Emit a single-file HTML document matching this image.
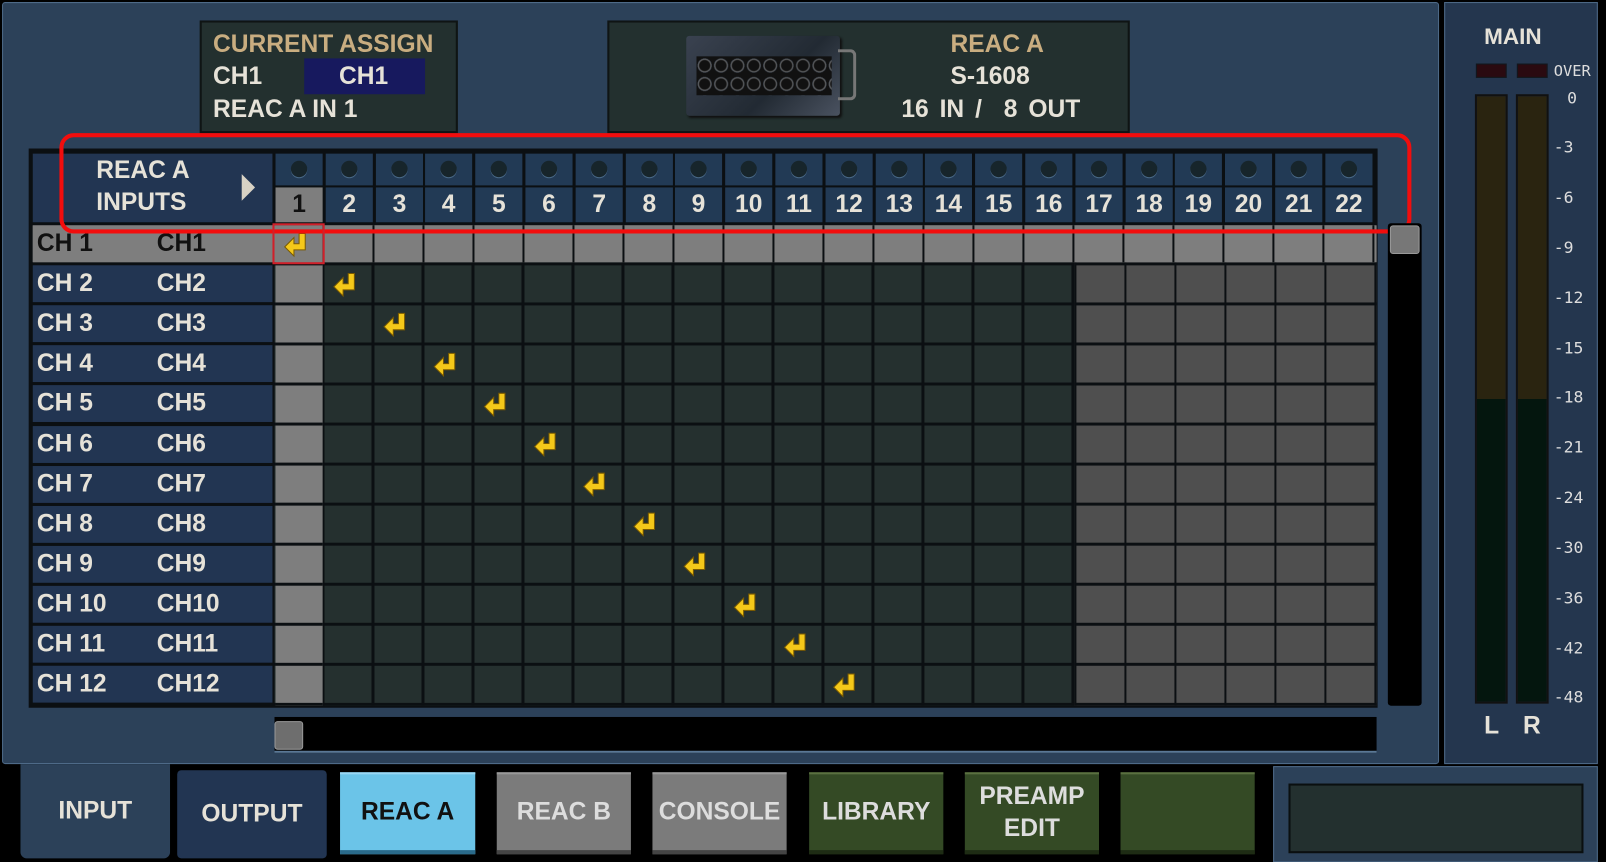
<!DOCTYPE html>
<html><head><meta charset="utf-8"><style>
*{margin:0;padding:0;box-sizing:border-box}
html,body{width:1606px;height:862px;overflow:hidden;background:#000}
#w{position:absolute;left:0;top:0;width:1568px;height:842px;transform:scale(1.02424);transform-origin:0 0;font-family:"Liberation Sans Narrow","Liberation Sans",sans-serif;font-weight:bold;color:#e6e2d8}
.a{position:absolute}
.t{position:absolute;white-space:nowrap;font-size:24px;line-height:1}
.cell{position:absolute;width:46px;text-align:center;font-size:24px;line-height:34px;top:183px;background:#223a55;height:34px}
.dot{position:absolute;top:150px;width:46px;height:31px;background:#223a55}
.dot:after{content:"";position:absolute;left:15px;top:7px;width:16px;height:16px;border-radius:50%;background:#17252b;box-shadow:0 1px 0 #4a6a88}
.lab{position:absolute;left:32px;width:234px;height:36px;background:#223552;font-size:24px;line-height:36px}
.lab span{position:absolute}
.arr{position:absolute;width:26px;height:26px}
.sc{position:absolute;left:1517px;font-size:16px;font-weight:normal;font-family:"DejaVu Sans Mono",monospace;color:#ddd}
.tab{position:absolute;top:754px;height:80px;font-size:24px;text-align:center;display:flex;align-items:center;justify-content:center;line-height:1.3}
</style></head><body><div id="w">
<!-- main panel -->
<div class="a" style="left:2px;top:2px;width:1403px;height:744px;background:#2c4159;border:1px solid #4e6a88;border-radius:3px"></div>
<div class="a" style="left:1410px;top:2px;width:150px;height:744px;background:#24364e;border:1px solid #4e6a88"></div>
<!-- current assign -->
<div class="a" style="left:195px;top:20px;width:252px;height:110px;background:#23302f;border:2px solid #0f1414"></div>
<div class="t" style="left:208px;top:32px;color:#c9ad80">CURRENT ASSIGN</div>
<div class="a" style="left:297px;top:57px;width:118px;height:35px;background:#17195e"></div>
<div class="t" style="left:208px;top:63px">CH1</div>
<div class="t" style="left:331px;top:63px">CH1</div>
<div class="t" style="left:208px;top:95px">REAC A IN 1</div>
<!-- reac box -->
<div class="a" style="left:593px;top:20px;width:510px;height:110px;background:#23302f;border:2px solid #0f1414"></div>
<div class="a" style="left:670px;top:35px;width:150px;height:78px;background:linear-gradient(135deg,#3a4250,#222a33 60%,#4a5260);border-radius:3px;box-shadow:2px 2px 2px #111"></div>
<div class="a" style="left:680px;top:55px;width:132px;height:38px;background:repeating-radial-gradient(circle at 8px 9px,#111 0 5px,#666 6px,transparent 7px) 0 0/16px 18px"></div>
<div class="a" style="left:818px;top:48px;width:18px;height:50px;border:3px solid #777;border-left:none;border-radius:0 6px 6px 0"></div>
<div class="t" style="left:928px;top:32px;color:#c9ad80">REAC A</div>
<div class="t" style="left:928px;top:63px">S-1608</div>
<div class="t" style="left:880px;top:95px;word-spacing:4px">16 IN / &nbsp;8 OUT</div>
<!-- grid frame -->
<div class="a" style="left:28px;top:145px;width:1317px;height:546px;background:#0b0f12"></div>
<div class="a" style="left:32px;top:150px;width:234px;height:67px;background:#223552"></div>
<div class="t" style="left:94px;top:155px">REAC A</div>
<div class="t" style="left:94px;top:186px">INPUTS</div>
<div class="a" style="left:236px;top:170px;width:0;height:0;border-left:13px solid #d8d2c4;border-top:13px solid transparent;border-bottom:13px solid transparent"></div>
<!-- header dots & numbers -->
<div class="dot" style="left:269px"></div><div class="dot" style="left:318px"></div><div class="dot" style="left:367px"></div><div class="dot" style="left:415px"></div><div class="dot" style="left:464px"></div><div class="dot" style="left:513px"></div><div class="dot" style="left:562px"></div><div class="dot" style="left:611px"></div><div class="dot" style="left:659px"></div><div class="dot" style="left:708px"></div><div class="dot" style="left:757px"></div><div class="dot" style="left:806px"></div><div class="dot" style="left:855px"></div><div class="dot" style="left:903px"></div><div class="dot" style="left:952px"></div><div class="dot" style="left:1001px"></div><div class="dot" style="left:1050px"></div><div class="dot" style="left:1099px"></div><div class="dot" style="left:1147px"></div><div class="dot" style="left:1196px"></div><div class="dot" style="left:1245px"></div><div class="dot" style="left:1294px"></div>
<div class="cell" style="left:269px;background:#7e7e7e;color:#111">1</div><div class="cell" style="left:318px">2</div><div class="cell" style="left:367px">3</div><div class="cell" style="left:415px">4</div><div class="cell" style="left:464px">5</div><div class="cell" style="left:513px">6</div><div class="cell" style="left:562px">7</div><div class="cell" style="left:611px">8</div><div class="cell" style="left:659px">9</div><div class="cell" style="left:708px">10</div><div class="cell" style="left:757px">11</div><div class="cell" style="left:806px">12</div><div class="cell" style="left:855px">13</div><div class="cell" style="left:903px">14</div><div class="cell" style="left:952px">15</div><div class="cell" style="left:1001px">16</div><div class="cell" style="left:1050px">17</div><div class="cell" style="left:1099px">18</div><div class="cell" style="left:1147px">19</div><div class="cell" style="left:1196px">20</div><div class="cell" style="left:1245px">21</div><div class="cell" style="left:1294px">22</div>
<!-- cell area -->
<div class="a" style="left:268px;top:220px;width:782px;height:469px;background:linear-gradient(90deg,transparent 0 46px,#0b0f12 46px) 0 0/48.82px 100%,linear-gradient(transparent 0 36px,#0b0f12 36px) 0 0/100% 39.1px,#25302f"></div>
<div class="a" style="left:1049px;top:220px;width:295px;height:469px;background:linear-gradient(90deg,#0b0f12 0 2px,transparent 2px) 0 0/48.82px 100%,linear-gradient(transparent 0 36px,#0b0f12 36px) 0 0/100% 39.1px,#4f4f4f"></div>
<div class="a" style="left:269px;top:220px;width:46px;height:469px;background:linear-gradient(transparent 0 36px,#0b0f12 36px) 0 0/100% 39.1px,#7e7e7e"></div>
<div class="a" style="left:32px;top:220px;width:1311px;height:36px;background:linear-gradient(90deg,transparent 0 236px,#0b0f12 236px 237px,transparent 237px),linear-gradient(90deg,transparent 0 46px,#0b0f12 46px) 236px 0/48.82px 100% no-repeat,#7e7e7e"></div>
<div class="a" style="left:268px;top:220px;width:1076px;height:36px;background:linear-gradient(90deg,#7e7e7e 0 1px,#7e7e7e 1px 47px,#0b0f12 47px 49px) 0 0/48.82px 100%"></div>
<!-- labels -->
<div class="lab" style="top:220px;background:#7e7e7e;color:#111"><span style="left:4px">CH 1</span><span style="left:121px">CH1</span></div>
<div class="lab" style="top:259px"><span style="left:4px">CH 2</span><span style="left:121px">CH2</span></div>
<div class="lab" style="top:298px"><span style="left:4px">CH 3</span><span style="left:121px">CH3</span></div>
<div class="lab" style="top:337px"><span style="left:4px">CH 4</span><span style="left:121px">CH4</span></div>
<div class="lab" style="top:376px"><span style="left:4px">CH 5</span><span style="left:121px">CH5</span></div>
<div class="lab" style="top:416px"><span style="left:4px">CH 6</span><span style="left:121px">CH6</span></div>
<div class="lab" style="top:455px"><span style="left:4px">CH 7</span><span style="left:121px">CH7</span></div>
<div class="lab" style="top:494px"><span style="left:4px">CH 8</span><span style="left:121px">CH8</span></div>
<div class="lab" style="top:533px"><span style="left:4px">CH 9</span><span style="left:121px">CH9</span></div>
<div class="lab" style="top:572px"><span style="left:4px">CH 10</span><span style="left:121px">CH10</span></div>
<div class="lab" style="top:611px"><span style="left:4px">CH 11</span><span style="left:121px">CH11</span></div>
<div class="lab" style="top:650px"><span style="left:4px">CH 12</span><span style="left:121px">CH12</span></div>
<!-- arrows -->
<svg width="0" height="0" style="position:absolute"><defs><symbol id="ar" viewBox="0 0 26 26"><path d="M16 2h6v16H11v6L2 15l9-9v6h5z" fill="#f4c81a" stroke="#7a5a00" stroke-width="1"/></symbol></defs></svg>
<svg class="arr" style="left:276px;top:226px"><use href="#ar"/></svg>
<svg class="arr" style="left:324px;top:265px"><use href="#ar"/></svg>
<svg class="arr" style="left:373px;top:304px"><use href="#ar"/></svg>
<svg class="arr" style="left:422px;top:343px"><use href="#ar"/></svg>
<svg class="arr" style="left:471px;top:382px"><use href="#ar"/></svg>
<svg class="arr" style="left:520px;top:421px"><use href="#ar"/></svg>
<svg class="arr" style="left:568px;top:460px"><use href="#ar"/></svg>
<svg class="arr" style="left:617px;top:499px"><use href="#ar"/></svg>
<svg class="arr" style="left:666px;top:538px"><use href="#ar"/></svg>
<svg class="arr" style="left:715px;top:578px"><use href="#ar"/></svg>
<svg class="arr" style="left:764px;top:617px"><use href="#ar"/></svg>
<svg class="arr" style="left:812px;top:656px"><use href="#ar"/></svg>
<!-- red outlines -->
<div class="a" style="left:58px;top:130px;width:1320px;height:98px;border:4px solid #f20d0d;border-radius:14px"></div>
<div class="a" style="left:266px;top:218px;width:51px;height:40px;border:2px solid #d0202a"></div>
<!-- scrollbars -->
<div class="a" style="left:1355px;top:218px;width:33px;height:471px;background:#000;border-radius:3px"></div>
<div class="a" style="left:1357px;top:220px;width:29px;height:28px;background:#777;border-radius:3px;border:1px solid #999"></div>
<div class="a" style="left:268px;top:700px;width:1076px;height:35px;background:#000;border-bottom:2px solid #5a7896"></div>
<div class="a" style="left:268px;top:704px;width:28px;height:28px;background:#6e6e6e;border:1px solid #999;border-radius:3px"></div>
<!-- meter -->
<div class="t" style="left:1449px;top:25px;font-size:22px">MAIN</div>
<div class="a" style="left:1441px;top:62px;width:30px;height:14px;background:#2a0a10;border:1px solid #11181e"></div>
<div class="a" style="left:1481px;top:62px;width:30px;height:14px;background:#2a0a10;border:1px solid #11181e"></div>
<div class="sc" style="left:1517px;top:60px;font-size:15px">OVER</div>
<div class="a" style="left:1440px;top:92px;width:32px;height:595px;background:linear-gradient(#2a2410 0 50%,#04160e 50%);border:2px solid #111"></div>
<div class="a" style="left:1480px;top:92px;width:32px;height:595px;background:linear-gradient(#2a2410 0 50%,#04160e 50%);border:2px solid #111"></div>
<div class="sc" style="left:1530px;top:86px">0</div>
<div class="sc" style="top:134px">-3</div><div class="sc" style="top:183px">-6</div><div class="sc" style="top:232px">-9</div>
<div class="sc" style="top:281px">-12</div><div class="sc" style="top:330px">-15</div><div class="sc" style="top:378px">-18</div>
<div class="sc" style="top:427px">-21</div><div class="sc" style="top:476px">-24</div><div class="sc" style="top:525px">-30</div>
<div class="sc" style="top:574px">-36</div><div class="sc" style="top:623px">-42</div><div class="sc" style="top:671px">-48</div>
<div class="t" style="left:1449px;top:697px">L</div><div class="t" style="left:1487px;top:697px">R</div>
<!-- tabs -->
<div class="tab" style="left:20px;top:746px;width:146px;height:92px;background:#2c4159;border-radius:0 0 6px 6px">INPUT</div>
<div class="tab" style="left:173px;top:752px;width:146px;height:86px;background:#223552;border-radius:4px">OUTPUT</div>
<div class="tab" style="left:332px;width:132px;background:#6bc4e8;color:#111;border-top:2px solid #9ad8f4;border-bottom:4px solid #2a6a8a">REAC A</div>
<div class="tab" style="left:485px;width:131px;background:#7b7b7b;color:#ddd;border-top:2px solid #999;border-bottom:4px solid #444">REAC B</div>
<div class="tab" style="left:637px;width:131px;background:#7b7b7b;color:#ddd;border-top:2px solid #999;border-bottom:4px solid #444">CONSOLE</div>
<div class="tab" style="left:790px;width:131px;background:#344a25;color:#ddd;border-top:2px solid #5a7040;border-bottom:4px solid #1e2c14">LIBRARY</div>
<div class="tab" style="left:942px;width:131px;background:#344a25;color:#ddd;border-top:2px solid #5a7040;border-bottom:4px solid #1e2c14">PREAMP<br>EDIT</div>
<div class="tab" style="left:1094px;width:131px;background:#344a25;border-top:2px solid #5a7040;border-bottom:4px solid #1e2c14"></div>
<div class="a" style="left:1243px;top:748px;width:317px;height:94px;background:#2c4159;border:1px solid #4e6a88"></div>
<div class="a" style="left:1258px;top:765px;width:288px;height:68px;background:#23302f;border:2px solid #0a0f10"></div>
</div></body></html>
